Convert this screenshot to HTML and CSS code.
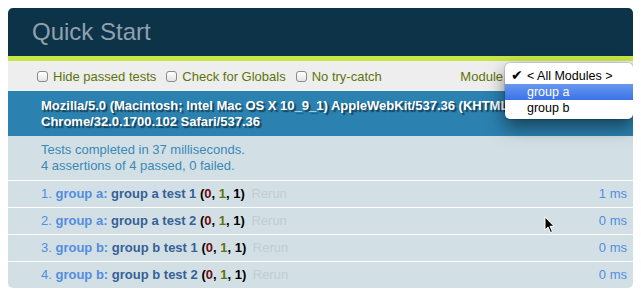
FILE: index.html
```html
<!DOCTYPE html>
<html lang="en">
<head>
  <meta charset="UTF-8" />
  <title>Quick Start</title>
  <link rel="stylesheet" href="styles.css">
</head>
<body>

<div class="qunit">
  <h1 class="qunit-header">Quick Start</h1>
  <div class="qunit-banner"></div>

  <div class="toolbar">
    <label class="check"><input type="checkbox"> Hide passed tests</label>
    <label class="check"><input type="checkbox"> Check for Globals</label>
    <label class="check"><input type="checkbox"> No try-catch</label>
    <span class="module-label">Module</span>

    <!-- the open select popup -->
    <ul class="module-menu">
      <li class="selected"><span class="tick">&#10004;</span>&lt; All Modules &gt;</li>
      <li class="hover">group a</li>
      <li>group b</li>
    </ul>
  </div>

  <div class="user-agent">
    Mozilla/5.0 (Macintosh; Intel Mac OS X 10_9_1) AppleWebKit/537.36 (KHTML, like Gecko)<br>
    Chrome/32.0.1700.102 Safari/537.36
  </div>

  <p class="test-result">
    Tests completed in 37 milliseconds.<br>
    4 assertions of 4 passed, 0 failed.
  </p>

  <ol class="tests">
    <li class="pass">
      <strong><span class="module-name">group a</span>: <span class="test-name">group a test 1</span> <b class="counts">(<b class="failed">0</b>, <b class="passed">1</b>, 1)</b></strong>
      <a href="#">Rerun</a>
      <span class="runtime">1 ms</span>
    </li>
    <li class="pass">
      <strong><span class="module-name">group a</span>: <span class="test-name">group a test 2</span> <b class="counts">(<b class="failed">0</b>, <b class="passed">1</b>, 1)</b></strong>
      <a href="#">Rerun</a>
      <span class="runtime">0 ms</span>
    </li>
    <li class="pass">
      <strong><span class="module-name">group b</span>: <span class="test-name">group b test 1</span> <b class="counts">(<b class="failed">0</b>, <b class="passed">1</b>, 1)</b></strong>
      <a href="#">Rerun</a>
      <span class="runtime">0 ms</span>
    </li>
    <li class="pass">
      <strong><span class="module-name">group b</span>: <span class="test-name">group b test 2</span> <b class="counts">(<b class="failed">0</b>, <b class="passed">1</b>, 1)</b></strong>
      <a href="#">Rerun</a>
      <span class="runtime">0 ms</span>
    </li>
  </ol>

  <svg class="cursor" width="12" height="18" viewBox="0 0 12 18">
    <path d="M1 1 L1 14 L4 11 L6.5 16.5 L8.5 15.6 L6 10.3 L10 10.3 Z" fill="#000" stroke="#fff" stroke-width="1"/>
  </svg>
</div>

</body>
</html>
```

FILE: styles.css
```css
body {
  margin: 8px;
  font-family: 'Liberation Sans', Arial, sans-serif;
  background: #fff;
}

.qunit {
  position: relative;
  font-size: 13px;
}

.qunit-header {
  margin: 0;
  padding: 12px 0 12px 24px;
  font-size: 24px;
  line-height: 24px;
  font-weight: normal;
  color: #8fa1ac;
  background-color: #0d3349;
  border-radius: 5px 5px 0 0;
}

.qunit-banner {
  height: 5px;
  background-color: #c6e746;
}

.toolbar {
  position: relative;
  display: flex;
  align-items: center;
  height: 30px;
  padding-left: 29px;
  color: #5e740b;
  background-color: #eee;
}

.check {
  display: flex;
  align-items: center;
  margin-right: 10px;
}

.check input {
  appearance: none;
  width: 11px;
  height: 11px;
  margin: 0 5px 0 0;
  border: 1px solid #8a8a8a;
  border-radius: 3px;
  background: linear-gradient(#fff, #e4e4e4);
}

.module-label {
  margin-left: auto;
  margin-right: 130px;
}

.module-menu {
  position: absolute;
  top: 2px;
  right: 0;
  width: 128px;
  margin: 0;
  padding: 4px 0 3px;
  list-style: none;
  font-size: 12.5px;
  line-height: 16px;
  color: #000;
  background: #fff;
  border-radius: 5px;
  box-shadow: 0 0 0 1px rgba(0, 0, 0, 0.12), 0 8px 18px rgba(0, 0, 0, 0.5);
  z-index: 2;
}

.module-menu li {
  padding-left: 22px;
}

.module-menu .tick {
  display: inline-block;
  width: 16px;
  margin-left: -16px;
  font-family: 'DejaVu Sans', sans-serif;
  font-size: 14px;
  line-height: 16px;
}

.module-menu .hover {
  color: #fff;
  background: linear-gradient(#6898f0, #3b72e8);
}

.user-agent {
  padding: 7px 0 6px 33px;
  line-height: 16px;
  font-weight: bold;
  color: #fff;
  background-color: #2b81af;
  text-shadow: rgba(0, 0, 0, 0.5) 2px 2px 1px;
}

.test-result {
  margin: 0;
  padding: 6px 6px 6px 33px;
  line-height: 16px;
  color: #3b88b5;
  background-color: #d2e0e6;
  border-bottom: 1px solid #fff;
}

.tests {
  margin: 0;
  padding: 0;
  list-style-position: inside;
}

.tests li {
  padding: 5px 6px 5px 33px;
  line-height: 16px;
  border-bottom: 1px solid #fff;
}

.tests li:last-child {
  border-bottom: none;
  border-radius: 0 0 5px 5px;
}

.tests .pass {
  color: #528ce0;
  background-color: #d2e0e6;
}

.tests .pass .test-name {
  color: #366097;
}

.counts {
  color: #000;
}

.counts .failed {
  color: #710909;
}

.counts .passed {
  color: #5e740b;
}

.tests a {
  padding-left: 3px;
  color: #c2ccd1;
  text-decoration: none;
}

.runtime {
  float: right;
}

.cursor {
  position: absolute;
  left: 536px;
  top: 208px;
}
```
